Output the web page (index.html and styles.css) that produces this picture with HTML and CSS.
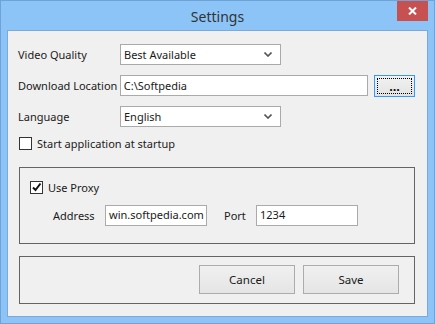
FILE: index.html
```html
<!DOCTYPE html>
<html lang="en">
<head>
  <meta charset="UTF-8">
  <title>Settings</title>
  <link rel="stylesheet" href="styles.css">
</head>
<body>
  <div class="window">
    <div class="titlebar">
      <span class="title">Settings</span>
      <button class="close" aria-label="Close">
        <svg width="9" height="8" viewBox="0 0 9 8">
          <path d="M1 0.5 L8 7.5 M8 0.5 L1 7.5" stroke="#fff" stroke-width="2"/>
        </svg>
      </button>
    </div>

    <div class="client">
      <div class="row">
        <label class="label">Video Quality</label>
        <div class="select">
          <span>Best Available</span>
          <svg class="arrow" width="8" height="5" viewBox="0 0 8 5">
            <path d="M0.5 0.5 L4 4 L7.5 0.5" stroke="#555" stroke-width="1.6" fill="none"/>
          </svg>
        </div>
      </div>

      <div class="row">
        <label class="label">Download Location</label>
        <div class="textbox wide">C:\Softpedia</div>
        <button class="browse"><span class="focus">...</span></button>
      </div>

      <div class="row">
        <label class="label">Language</label>
        <div class="select">
          <span>English</span>
          <svg class="arrow" width="8" height="5" viewBox="0 0 8 5">
            <path d="M0.5 0.5 L4 4 L7.5 0.5" stroke="#555" stroke-width="1.6" fill="none"/>
          </svg>
        </div>
      </div>

      <div class="check-row startup">
        <span class="checkbox"></span>
        <span>Start application at startup</span>
      </div>

      <div class="group proxy">
        <div class="check-row">
          <span class="checkbox">
            <svg width="11" height="11" viewBox="0 0 11 11">
              <path d="M2 5.5 L4.5 8 L9.5 1.5" stroke="#111" stroke-width="2" fill="none"/>
            </svg>
          </span>
          <span>Use Proxy</span>
        </div>
        <div class="proxy-row">
          <span class="field-label address">Address</span>
          <div class="textbox small">win.softpedia.com</div>
          <span class="field-label port">Port</span>
          <div class="textbox small">1234</div>
        </div>
      </div>

      <div class="group actions">
        <button class="button">Cancel</button>
        <button class="button">Save</button>
      </div>
    </div>
  </div>
</body>
</html>
```

FILE: styles.css
```css
:root {
  --frame: #8cc4f8;
  --frame-edge: #6fa2d6;
  --client: #f0f0f0;
  --field-border: #aaaaaa;
  --text: #1a1a1a;
}

body {
  margin: 0;
  font-family: 'Noto Sans', sans-serif;
  font-size: 11px;
  color: var(--text);
}

.window {
  width: 435px;
  height: 324px;
  box-sizing: border-box;
  border: 1px solid var(--frame-edge);
  background-color: var(--frame);
  display: flex;
  flex-direction: column;
}

.titlebar {
  position: relative;
  height: 29px;
  display: flex;
  align-items: center;
  justify-content: center;
}

.title {
  font-size: 14px;
  color: #333;
  margin-top: 1px;
}

.close {
  position: absolute;
  top: 0;
  right: 6px;
  width: 31px;
  height: 20px;
  border: none;
  padding: 0;
  background-color: #c75050;
  display: flex;
  align-items: center;
  justify-content: center;
}

.client {
  flex: 1;
  margin: 0 6px 6px;
  border: 1px solid #7ba9da;
  background-color: var(--client);
  padding: 13px 12px 0 10px;
}

.row {
  display: flex;
  align-items: center;
  height: 21px;
  margin-bottom: 10px;
}

.label {
  width: 102px;
  white-space: nowrap;
}

.select,
.textbox {
  box-sizing: border-box;
  height: 21px;
  border: 1px solid var(--field-border);
  background-color: white;
  display: flex;
  align-items: center;
  padding: 0 3px;
  white-space: nowrap;
}

.select {
  width: 161px;
  justify-content: space-between;
}

.arrow {
  margin-right: 5px;
}

.textbox.wide {
  width: 249px;
}

.textbox.small {
  width: 102px;
  height: 21px;
  align-items: flex-start;
  padding-top: 1px;
}

.browse {
  box-sizing: border-box;
  margin-left: 6px;
  width: 41px;
  height: 22px;
  padding: 2px;
  border: 1px solid #3399ff;
  background: linear-gradient(#f2f2f2, #e3e3e3);
  display: flex;
}

.browse .focus {
  flex: 1;
  border: 1px dotted #000;
  font-weight: bold;
  font-size: 13px;
  line-height: 12px;
  display: flex;
  align-items: flex-end;
  justify-content: center;
  color: #111;
}

.check-row {
  display: flex;
  align-items: center;
  gap: 5px;
  height: 13px;
  white-space: nowrap;
}

.startup {
  margin: 1px 0 0 1px;
}

.checkbox {
  box-sizing: border-box;
  width: 13px;
  height: 13px;
  border: 1px solid #333;
  background-color: white;
  display: flex;
  align-items: center;
  justify-content: center;
}

.group {
  box-sizing: border-box;
  width: 396px;
  margin-left: 1px;
  border: 1px solid #646464;
}

.proxy {
  height: 77px;
  margin-top: 17px;
  padding: 13px 0 0 10px;
}

.proxy-row {
  display: flex;
  align-items: center;
  margin: 11px 0 0 23px;
}

.field-label.address {
  width: 52px;
}

.field-label.port {
  width: 32px;
  margin-left: 17px;
}

.actions {
  height: 48px;
  margin-top: 12px;
  padding: 8px 15px 0 0;
  display: flex;
  justify-content: flex-end;
  align-items: flex-start;
  gap: 8px;
}

.button {
  width: 96px;
  height: 29px;
  border: 1px solid #acacac;
  background: linear-gradient(#f0f0f0, #e5e5e5);
  font-family: 'Noto Sans', sans-serif;
  font-size: 11.5px;
  color: var(--text);
}
```
